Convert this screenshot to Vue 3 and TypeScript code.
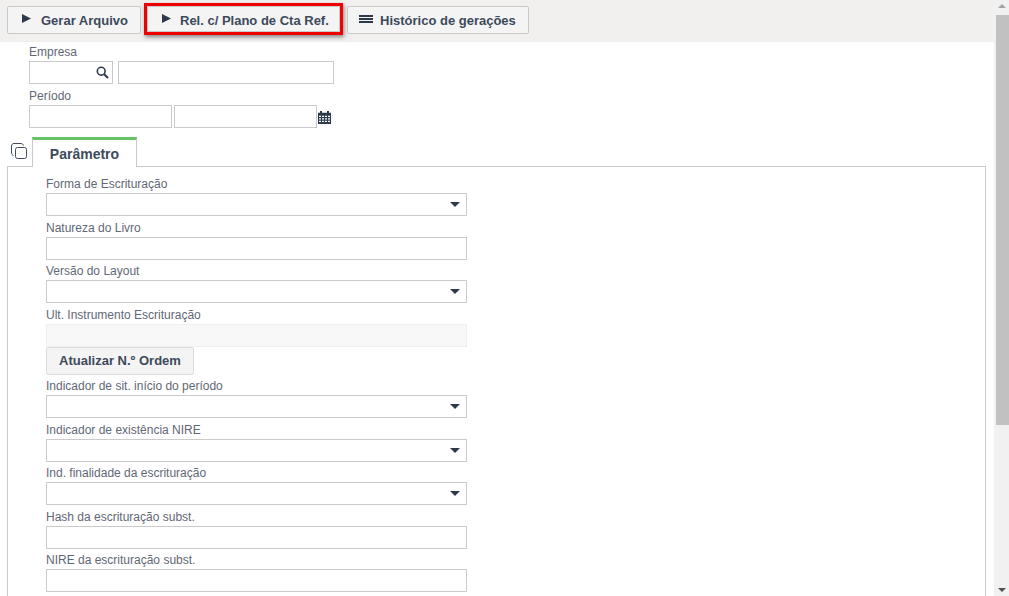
<script setup lang="ts">
interface Field {
  label: string
  kind: 'select' | 'text' | 'readonly'
  action?: string
}

const fields: Field[] = [
  { label: 'Forma de Escrituração', kind: 'select' },
  { label: 'Natureza do Livro', kind: 'text' },
  { label: 'Versão do Layout', kind: 'select' },
  { label: 'Ult. Instrumento Escrituração', kind: 'readonly', action: 'Atualizar N.º Ordem' },
  { label: 'Indicador de sit. início do período', kind: 'select' },
  { label: 'Indicador de existência NIRE', kind: 'select' },
  { label: 'Ind. finalidade da escrituração', kind: 'select' },
  { label: 'Hash da escrituração subst.', kind: 'text' },
  { label: 'NIRE da escrituração subst.', kind: 'text' },
]
</script>

<template>
  <div class="page">
    <div class="main">
      <div class="toolbar">
        <button class="tool first">
          <svg class="play" width="9" height="9" viewBox="0 0 9 9"><path d="M0 0l9 4.5-9 4.5z" /></svg>
          Gerar Arquivo
        </button>
        <button class="tool marked">
          <svg class="play" width="9" height="9" viewBox="0 0 9 9"><path d="M0 0l9 4.5-9 4.5z" /></svg>
          Rel. c/ Plano de Cta Ref.
        </button>
        <button class="tool last">
          <svg class="bars" width="14" height="8" viewBox="0 0 14 8"><path d="M0 0h14v2H0zM0 3h14v2H0zM0 6h14v2H0z" /></svg>
          Histórico de gerações
        </button>
      </div>

      <div class="filters">
        <label class="lbl">Empresa</label>
        <div class="row">
          <div class="box code">
            <svg width="13" height="13" viewBox="0 0 13 13" fill="none" stroke="#2c3a4b">
              <circle cx="5.2" cy="5.2" r="3.9" stroke-width="1.6" />
              <path d="M8.2 8.2l3.8 3.8" stroke-width="2" />
            </svg>
          </div>
          <div class="box name"></div>
        </div>
        <label class="lbl">Período</label>
        <div class="row tight">
          <div class="box date"></div>
          <div class="box date"></div>
          <svg class="cal" width="13" height="13" viewBox="0 0 13 14" preserveAspectRatio="none">
            <path fill="#2c3a4b" d="M2 0h2v2h5V0h2v2h2v12H0V2h2z" />
            <path fill="#fff" d="M1 5h2v1.5H1zM4 5h2v1.5H4zM7 5h2v1.5H7zM10 5h2v1.5h-2zM1 7.7h2v1.5H1zM4 7.7h2v1.5H4zM7 7.7h2v1.5H7zM10 7.7h2v1.5h-2zM1 10.4h2v1.5H1zM4 10.4h2v1.5H4zM7 10.4h2v1.5H7zM10 10.4h2v1.5h-2z" />
          </svg>
        </div>
      </div>

      <div class="tabs">
        <svg class="copy" width="16" height="16" viewBox="0 0 16 16" fill="none" stroke="#3f4c5c" stroke-width="1">
          <rect x="4.5" y="4.5" width="11" height="11" rx="2" />
          <path d="M2.5 12.5C1.2 12 .5 11.2.5 10V3C.5 1.5 1.5.5 3 .5h7c1.2 0 2 .7 2.5 2" />
        </svg>
        <div class="tab">Parâmetro</div>
      </div>

      <div class="panel">
        <div v-for="f in fields" :key="f.label" class="field">
          <label class="lbl">{{ f.label }}</label>
          <div class="box wide" :class="{ ro: f.kind === 'readonly' }">
            <span v-if="f.kind === 'select'" class="caret"></span>
          </div>
          <button v-if="f.action" class="action">{{ f.action }}</button>
        </div>
      </div>
    </div>

    <div class="scrollbar">
      <span class="arrow up"></span>
      <div class="thumb"></div>
      <span class="arrow down"></span>
    </div>
  </div>
</template>

<style scoped>
.page {
  display: flex;
  width: 1009px;
  height: 596px;
  overflow: hidden;
  background: #fff;
  font-family: "Liberation Sans", Arial, sans-serif;
}
.main {
  flex: 1;
  min-width: 0;
}
.toolbar {
  display: flex;
  align-items: flex-start;
  gap: 6px;
  height: 42px;
  padding: 6px 7px 0;
  box-sizing: border-box;
  background: #f1f0ee;
}
.tool {
  display: flex;
  align-items: center;
  gap: 9px;
  height: 28px;
  padding: 0 0 0 14px;
  box-sizing: border-box;
  border: 1px solid #c9c9c9;
  border-radius: 2px;
  background: #f4f4f4;
  color: #3c4a5b;
  font: bold 13px "Liberation Sans", Arial, sans-serif;
}
.first {
  width: 134px;
  gap: 10px;
}
.marked {
  width: 193px;
  height: 26px;
  margin-right: 1px;
  padding-top: 2px;
  border-radius: 0;
  outline: 3px solid #f00000;
  outline-offset: 0;
  box-shadow: 1px 2px 4px 3px rgba(0, 0, 0, 0.45);
}
.last {
  width: 182px;
  padding-left: 11px;
  gap: 7px;
}
.tool .play {
  fill: #2c3a4b;
  margin-top: -3px;
}
.tool .bars {
  fill: #2c3a4b;
  margin-top: -2px;
}
.filters {
  padding-left: 29px;
}
.lbl {
  display: block;
  height: 19px;
  padding-top: 3px;
  box-sizing: border-box;
  font-size: 12px;
  line-height: 14px;
  color: #5f6875;
}
.row {
  display: flex;
  gap: 5px;
  margin-bottom: 2px;
}
.row.tight {
  gap: 2px;
  align-items: center;
  margin-bottom: 0;
}
.box {
  display: flex;
  align-items: center;
  justify-content: flex-end;
  height: 23px;
  box-sizing: border-box;
  border: 1px solid #cacaca;
  background: #fff;
}
.code {
  width: 84px;
  padding-right: 3px;
}
.name {
  width: 216px;
}
.date {
  width: 143px;
}
.cal {
  margin-left: -1px;
  margin-top: 1px;
}
.tabs {
  display: flex;
  align-items: flex-end;
  height: 29px;
  margin: 9px 0 0 11px;
  position: relative;
}
.copy {
  position: absolute;
  left: 0;
  top: 6px;
}
.tab {
  width: 105px;
  height: 30px;
  margin-left: 21px;
  margin-bottom: -1px;
  box-sizing: border-box;
  border: 1px solid #cacaca;
  border-top: 3px solid #65c466;
  border-bottom: 0;
  background: #fff;
  position: relative;
  z-index: 1;
  text-align: center;
  font-size: 14px;
  font-weight: bold;
  line-height: 29px;
  color: #3c4a5b;
}
.panel {
  margin: 0 8px 0 7px;
  height: 460px;
  box-sizing: border-box;
  border: 1px solid #cacaca;
  padding: 5.5px 0 0 38px;
}
.field .lbl {
  height: 20.5px;
  padding-top: 4.5px;
}
.wide {
  width: 421px;
  padding-right: 5px;
}
.ro {
  background: #f8f8f8;
  border-color: #efefef;
}
.caret {
  width: 0;
  height: 0;
  margin-right: 1px;
  border-left: 5px solid transparent;
  border-right: 5px solid transparent;
  border-top: 5px solid #2c3a4b;
}
.action {
  display: block;
  width: 148px;
  height: 28px;
  box-sizing: border-box;
  border: 1px solid #dcdcdc;
  border-radius: 2px;
  background: #f4f4f4;
  color: #3c4a5b;
  font: bold 13px "Liberation Sans", Arial, sans-serif;
}
.scrollbar {
  position: relative;
  flex: 0 0 15px;
  background: #f1f1f1;
}
.thumb {
  position: absolute;
  top: 15px;
  left: 2px;
  right: 0;
  height: 410px;
  background: #c1c1c1;
}
.arrow {
  position: absolute;
  left: 4px;
  width: 0;
  height: 0;
  border-left: 4px solid transparent;
  border-right: 4px solid transparent;
}
.arrow.up {
  top: 4px;
  border-bottom: 4px solid #a3a3a3;
}
.arrow.down {
  bottom: 4px;
  border-top: 4px solid #505050;
}
</style>
